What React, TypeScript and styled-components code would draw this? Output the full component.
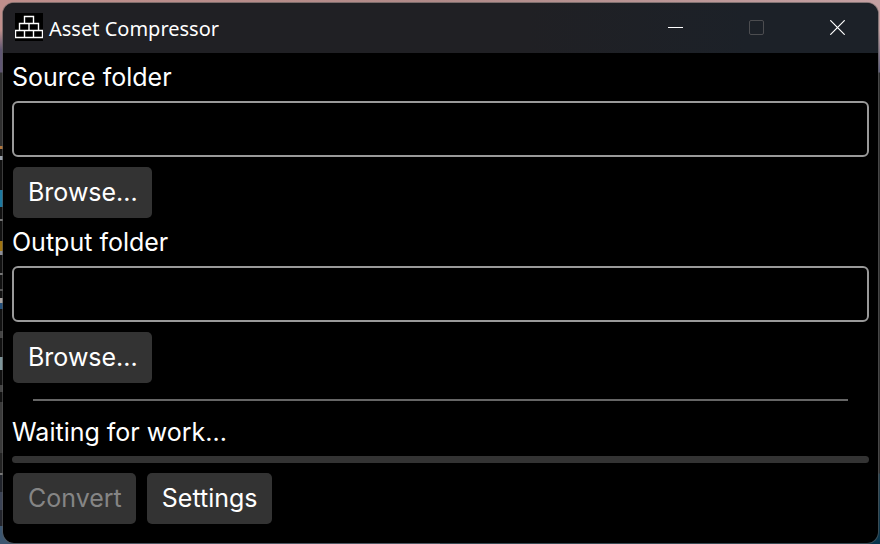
import React, { useId } from "react";
import styled, { createGlobalStyle } from "styled-components";

const GlobalStyle = createGlobalStyle`
  *, *::before, *::after { box-sizing: border-box; }
  html, body, #root { height: 100%; }
  body { margin: 0; overflow: hidden; background: #2b2b2b; }
`;

const Desktop = styled.div`
  min-height: 100%;
  display: flex;
  padding: 2px 1px 0 2px;
  background:
    linear-gradient(90deg, #c08f8c, #b08a88 50%, #c4a0a2) top / 100% 4px no-repeat,
    linear-gradient(
        #c08f8c 0 30px, #5f5672 50px 72px, #2f2f2f 73px 146px,
        #b0763c 146px 149px, #151515 149px 156px, #9aa2ac 156px 160px,
        #111 160px 190px, #1b78a0 190px 207px, #111 207px 219px,
        #777 219px 221px, #111 221px 241px, #a07410 241px 251px,
        #8d8f98 251px 255px, #111 255px 273px, #777 273px 275px,
        #111 275px 289px, #555 289px 291px, #111 291px 298px,
        #a9a3a0 298px 303px, #24507c 303px 309px, #111 309px 331px,
        #444 331px 338px, #111 338px 357px, #7d959a 357px 370px,
        #111 370px 385px, #444 385px 392px, #111 392px 402px,
        #3a3a3a 402px 453px, #222 453px 473px, #777 473px 475px,
        #20232b 475px 492px, #3b4355 492px 510px, #22242c 510px 526px, #3c5670 526px
      ) left / 50% 100% no-repeat,
    linear-gradient(
        #c4a0a2 0 30px, #62607c 70px 72px, #2f2f2f 73px 473px,
        #27424f 474px, #06344c
      ) right / 50% 100% no-repeat;
`;

const Window = styled.main`
  flex: 1;
  display: flex;
  flex-direction: column;
  overflow: hidden;
  border: 1px solid #59595999;
  border-radius: 12px;
  background: #000;
  background-clip: padding-box;
  color: #fff;
  font-family: Inter, "Liberation Sans", sans-serif;
  font-size: 25px;
  line-height: 30px;
`;

const TitleBar = styled.header`
  display: flex;
  align-items: center;
  height: 50px;
  padding: 0 0 2px 12px;
  background: linear-gradient(90deg, #202024 0%, #202024 60%, #1c2128 85%);
`;

const Title = styled.h1`
  flex: 1;
  margin: 0;
  padding: 4px 0 0 6px;
  font: 400 20px/28px "Noto Sans", sans-serif;
`;

const CaptionButton = styled.button`
  display: flex;
  align-items: flex-start;
  justify-content: center;
  width: 81px;
  height: 48px;
  padding: 17px 0 0;
  border: 0;
  background: transparent;
  color: #fff;
  &:disabled { color: #4c4d50; }
`;

const Content = styled.form`
  display: flex;
  flex-direction: column;
  padding: 9px;
`;

const Field = styled.div`
  display: flex;
  flex-direction: column;
  align-items: flex-start;
  margin-bottom: 9px;
`;

const Label = styled.label`
  margin-bottom: 9px;
`;

const PathInput = styled.input`
  width: 100%;
  height: 56px;
  margin-bottom: 10px;
  padding: 0 12px;
  border: 2px solid #999;
  border-radius: 6px;
  outline: 0;
  background: #000;
  color: inherit;
  font: inherit;
`;

const Button = styled.button`
  height: 51px;
  margin-left: 1px;
  padding: 0 14px 2px 15px;
  border: 0;
  border-radius: 5px;
  background: #333;
  color: #fff;
  font: inherit;
  &:disabled { color: #858585; }
`;

const Divider = styled.hr`
  height: 2px;
  margin: 7px 21px 16px;
  border: 0;
  background: #666;
`;

const Progress = styled.progress`
  appearance: none;
  width: 100%;
  height: 7px;
  margin-bottom: 10px;
  border: 0;
  border-radius: 4px;
  overflow: hidden;
  background: #333;
  &::-webkit-progress-bar { background: #333; }
  &::-webkit-progress-value { background: #999; }
`;

const Actions = styled.div`
  display: flex;
  gap: 10px;
`;

function BoxesIcon() {
  return (
    <svg width="28" height="28" viewBox="0 0 28 28" aria-hidden="true">
      <path d="M0 0h28v28H0z" fill="#000" />
      <path
        d="M9.5 10.5v-7h9v7M4.5 17.5v-7h19v7M14 10.5v7M.5 17.5h27v7H.5zM9.5 17.5v7M18.5 17.5v7"
        fill="none"
        stroke="#fff"
        strokeWidth="1.4"
      />
    </svg>
  );
}

function FolderField({ label }: { label: string }) {
  const id = useId();
  return (
    <Field>
      <Label htmlFor={id}>{label}</Label>
      <PathInput id={id} type="text" />
      <Button type="button">Browse...</Button>
    </Field>
  );
}

export default function App() {
  return (
    <>
      <GlobalStyle />
      <Desktop>
        <Window>
          <TitleBar>
            <BoxesIcon />
            <Title>Asset Compressor</Title>
            <CaptionButton type="button" aria-label="Minimize">
              <svg width="15" height="15" viewBox="0 0 15 15">
                <path d="M0 7.5h15" stroke="currentColor" />
              </svg>
            </CaptionButton>
            <CaptionButton type="button" aria-label="Maximize" disabled>
              <svg width="15" height="15" viewBox="0 0 15 15">
                <rect x=".5" y=".5" width="14" height="14" rx="1.5" fill="none" stroke="currentColor" />
              </svg>
            </CaptionButton>
            <CaptionButton type="button" aria-label="Close">
              <svg width="15" height="15" viewBox="0 0 15 15">
                <path d="M.3.3l14.4 14.4M14.7.3L.3 14.7" stroke="currentColor" strokeWidth="1.2" />
              </svg>
            </CaptionButton>
          </TitleBar>
          <Content onSubmit={(event: React.FormEvent) => event.preventDefault()}>
            <FolderField label="Source folder" />
            <FolderField label="Output folder" />
            <Divider />
            <Label htmlFor="work-progress">Waiting for work...</Label>
            <Progress id="work-progress" value={0} max={100} />
            <Actions>
              <Button type="submit" disabled>Convert</Button>
              <Button type="button">Settings</Button>
            </Actions>
          </Content>
        </Window>
      </Desktop>
    </>
  );
}
